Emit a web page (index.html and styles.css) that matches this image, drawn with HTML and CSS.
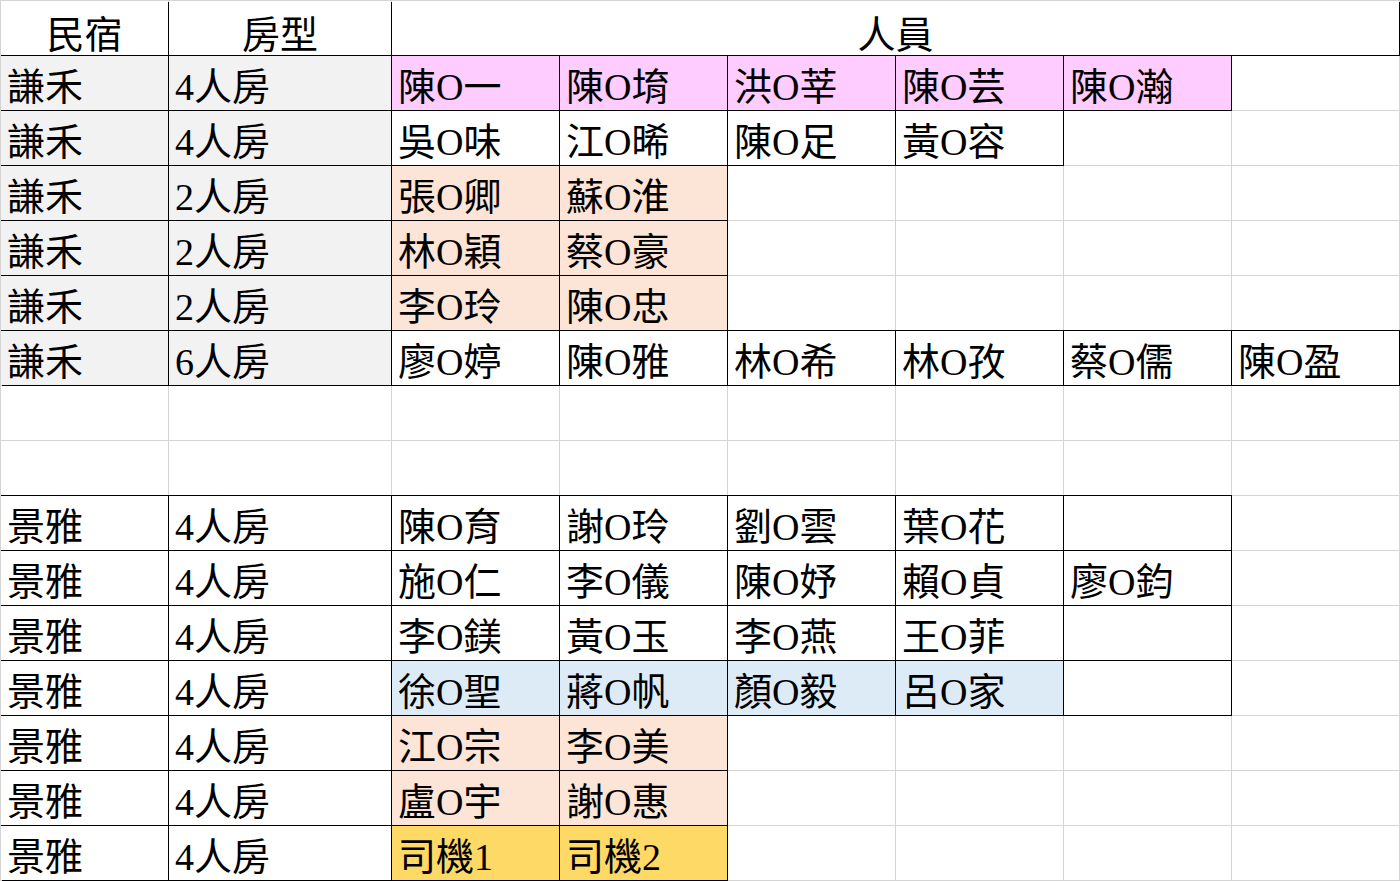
FILE: index.html
```html
<!DOCTYPE html>
<html lang="zh-Hant">

<head>
    <meta charset="UTF-8" />
    <meta name="viewport" content="width=device-width, initial-scale=1.0" />
    <title>住宿分配</title>
    <link rel="stylesheet" href="styles.css">
</head>

<body>
    <div class="sheet">
        <!-- header -->
        <div class="cell head first">民宿</div>
        <div class="cell head">房型</div>
        <div class="cell head wide">人員</div>

        <!-- 謙禾 -->
        <div class="cell grey first">謙禾</div>
        <div class="cell grey box">4人房</div>
        <div class="cell pink box">陳O一</div>
        <div class="cell pink box">陳O堉</div>
        <div class="cell pink box">洪O莘</div>
        <div class="cell pink box">陳O芸</div>
        <div class="cell pink box">陳O瀚</div>
        <div class="cell"></div>

        <div class="cell grey first">謙禾</div>
        <div class="cell grey box">4人房</div>
        <div class="cell box">吳O味</div>
        <div class="cell box">江O晞</div>
        <div class="cell box">陳O足</div>
        <div class="cell box">黃O容</div>
        <div class="cell"></div>
        <div class="cell"></div>

        <div class="cell grey first">謙禾</div>
        <div class="cell grey box">2人房</div>
        <div class="cell peach box">張O卿</div>
        <div class="cell peach box">蘇O淮</div>
        <div class="cell"></div>
        <div class="cell"></div>
        <div class="cell"></div>
        <div class="cell"></div>

        <div class="cell grey first">謙禾</div>
        <div class="cell grey box">2人房</div>
        <div class="cell peach box">林O穎</div>
        <div class="cell peach box">蔡O豪</div>
        <div class="cell"></div>
        <div class="cell"></div>
        <div class="cell"></div>
        <div class="cell"></div>

        <div class="cell grey first">謙禾</div>
        <div class="cell grey box">2人房</div>
        <div class="cell peach box">李O玲</div>
        <div class="cell peach box">陳O忠</div>
        <div class="cell"></div>
        <div class="cell"></div>
        <div class="cell"></div>
        <div class="cell"></div>

        <div class="cell grey first">謙禾</div>
        <div class="cell grey box">6人房</div>
        <div class="cell box">廖O婷</div>
        <div class="cell box">陳O雅</div>
        <div class="cell box">林O希</div>
        <div class="cell box">林O孜</div>
        <div class="cell box">蔡O儒</div>
        <div class="cell box">陳O盈</div>

        <!-- empty rows -->
        <div class="cell"></div>
        <div class="cell"></div>
        <div class="cell"></div>
        <div class="cell"></div>
        <div class="cell"></div>
        <div class="cell"></div>
        <div class="cell"></div>
        <div class="cell"></div>

        <div class="cell"></div>
        <div class="cell"></div>
        <div class="cell"></div>
        <div class="cell"></div>
        <div class="cell"></div>
        <div class="cell"></div>
        <div class="cell"></div>
        <div class="cell"></div>

        <!-- 景雅 -->
        <div class="cell first">景雅</div>
        <div class="cell box">4人房</div>
        <div class="cell box">陳O育</div>
        <div class="cell box">謝O玲</div>
        <div class="cell box">劉O雲</div>
        <div class="cell box">葉O花</div>
        <div class="cell box"></div>
        <div class="cell"></div>

        <div class="cell first">景雅</div>
        <div class="cell box">4人房</div>
        <div class="cell box">施O仁</div>
        <div class="cell box">李O儀</div>
        <div class="cell box">陳O妤</div>
        <div class="cell box">賴O貞</div>
        <div class="cell box">廖O鈞</div>
        <div class="cell"></div>

        <div class="cell first">景雅</div>
        <div class="cell box">4人房</div>
        <div class="cell box">李O鎂</div>
        <div class="cell box">黃O玉</div>
        <div class="cell box">李O燕</div>
        <div class="cell box">王O菲</div>
        <div class="cell box"></div>
        <div class="cell"></div>

        <div class="cell first">景雅</div>
        <div class="cell box">4人房</div>
        <div class="cell blue box">徐O聖</div>
        <div class="cell blue box">蔣O帆</div>
        <div class="cell blue box">顏O毅</div>
        <div class="cell blue box">呂O家</div>
        <div class="cell box"></div>
        <div class="cell"></div>

        <div class="cell first">景雅</div>
        <div class="cell box">4人房</div>
        <div class="cell peach box">江O宗</div>
        <div class="cell peach box">李O美</div>
        <div class="cell"></div>
        <div class="cell"></div>
        <div class="cell"></div>
        <div class="cell"></div>

        <div class="cell first">景雅</div>
        <div class="cell box">4人房</div>
        <div class="cell peach box">盧O宇</div>
        <div class="cell peach box">謝O惠</div>
        <div class="cell"></div>
        <div class="cell"></div>
        <div class="cell"></div>
        <div class="cell"></div>

        <div class="cell first">景雅</div>
        <div class="cell box">4人房</div>
        <div class="cell gold box">司機1</div>
        <div class="cell gold box">司機2</div>
        <div class="cell"></div>
        <div class="cell"></div>
        <div class="cell"></div>
        <div class="cell"></div>
    </div>
</body>

</html>
```

FILE: styles.css
```css
body {
    margin: 0;
    padding: 0;
    background-color: #fff;
    font-family: 'Liberation Serif', 'Noto Sans CJK TC', serif;
    color: #000;
}

/* the grey gridlines are the 1px gaps showing the sheet background */
.sheet {
    display: grid;
    grid-template-columns: 167px 222px repeat(6, 167px);
    grid-auto-rows: 54px;
    gap: 1px;
    padding: 1px;
    width: 1400px;
    height: 881px;
    box-sizing: border-box;
    background-color: #d4d4d4;
    overflow: hidden;
}

.cell {
    background-color: #fff;
    display: flex;
    align-items: flex-end;
    padding: 0 0 4px 6px;
    font-size: 38px;
    line-height: 1;
    white-space: nowrap;
    box-sizing: border-box;
}

/* black cell borders sit in the gap around the cell */
.box {
    outline: 1px solid #000;
}

/* first column: no black line on the sheet's left edge */
.first {
    box-shadow: 1px 1px 0 #000, 0 -1px 0 #000;
}

.head {
    justify-content: center;
    padding: 0 0 1px 0;
    box-shadow: 1px 1px 0 #000;
}

.wide {
    grid-column: span 6;
}

.grey {
    background-color: #f2f2f2;
}

.pink {
    background-color: #ffccff;
}

.peach {
    background-color: #fce4d6;
}

.blue {
    background-color: #ddebf7;
}

.gold {
    background-color: #ffd966;
}
```
